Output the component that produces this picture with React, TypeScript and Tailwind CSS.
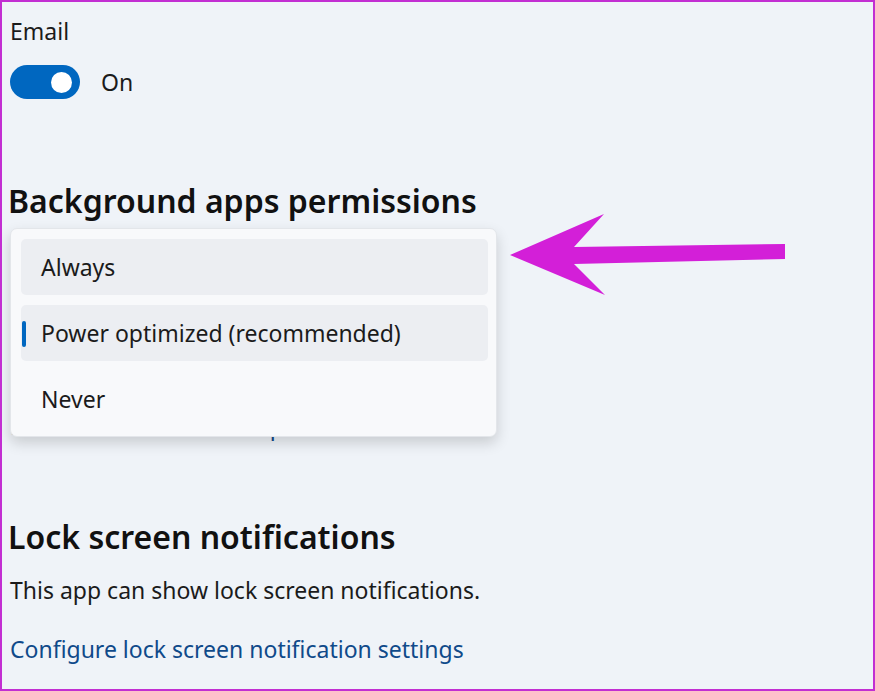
import React from "react";

const options = [
  { label: "Always", bg: "bg-[#eceef2]", selected: false },
  { label: "Power optimized (recommended)", bg: "bg-[#eceef2]", selected: true },
  { label: "Never", bg: "", selected: false },
];

const App = () => {
  return (
    <div
      className="relative w-[875px] h-[691px] overflow-hidden border-2 border-[#c22ed2] bg-[#eff3f8] text-[#1b1b1b]"
      style={{ fontFamily: '"Noto Sans", "Open Sans", sans-serif' }}
    >
      <div className="pl-[8px] pt-[14px]">
        {/* Email toggle */}
        <div className="text-[23px] leading-[30px]">Email</div>
        <div className="mt-[19px] flex items-center gap-[21px]">
          <div className="w-[70px] h-[34px] rounded-full bg-[#0067c0] flex items-center justify-end pr-[8px]">
            <div className="w-[21px] h-[21px] rounded-full bg-white" />
          </div>
          <span className="text-[23px] leading-[30px]">On</span>
        </div>

        {/* Background apps permissions */}
        <h2 className="mt-[82px] -ml-[2px] text-[32px] leading-[40px] font-semibold text-[#111]">
          Background apps permissions
        </h2>
        <div className="relative h-[296px]">
          <div className="pt-[190px] text-[23px] leading-[30px] text-[#0f4a8a]">Learn more about this option</div>

          {/* open dropdown */}
          <div className="absolute left-0 top-[7px] w-[487px] rounded-[7px] bg-[#f8f9fb] shadow-[0_6px_14px_rgba(0,0,0,0.16)] border border-[#e3e6ea] pt-[10px] pb-[9px] pl-[10px] pr-[8px] flex flex-col gap-[10px]">
            {options.map((o) => (
              <div key={o.label} className={`relative h-[56px] rounded-[5px] flex items-center pl-[20px] ${o.bg}`}>
                {o.selected && (
                  <div className="absolute left-[1px] top-[16px] w-[4px] h-[26px] rounded-full bg-[#0067c0]" />
                )}
                <span className="text-[23px] leading-[30px]">{o.label}</span>
              </div>
            ))}
          </div>
        </div>

        {/* Lock screen */}
        <h2 className="-ml-[2px] text-[32px] leading-[40px] font-semibold text-[#111]">Lock screen notifications</h2>
        <p className="mt-[18px] text-[23px] leading-[30px]">This app can show lock screen notifications.</p>
        <p className="mt-[29px] text-[23px] leading-[30px] text-[#0f4a8a]">Configure lock screen notification settings</p>
      </div>

      {/* annotation arrow */}
      <svg className="absolute left-0 top-0" width="875" height="691" viewBox="0 0 875 691">
        <polygon
          points="508,253 602,212 572,245 783,242 783,257 572,262 603,293"
          fill="#d31fd8"
        />
      </svg>
    </div>
  );
};

export default App;
